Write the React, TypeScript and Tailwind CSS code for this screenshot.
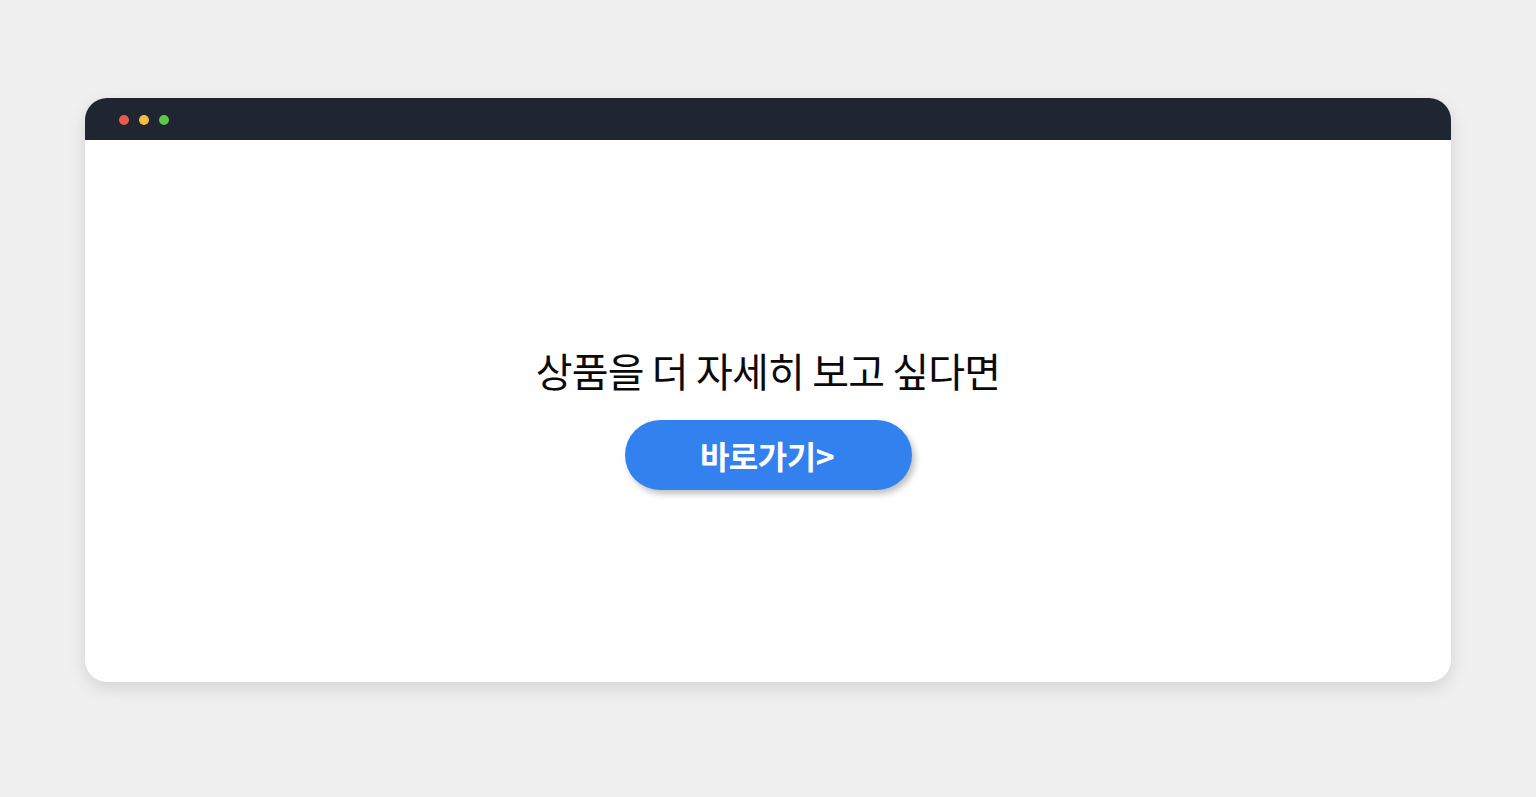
import React from "react";

export default function App() {
  return (
    <div className="w-full h-[797px] bg-[#f0f0f0] pt-[98px] px-[85px]" style={{ fontFamily: '"Noto Sans CJK KR", "Noto Sans", sans-serif' }}>
      <div className="h-[584px] rounded-[22px] bg-white overflow-hidden flex flex-col shadow-[0_6px_18px_rgba(0,0,0,0.12)]">
        <div className="h-[42px] bg-[#1f2531] flex items-center pl-[34px] pt-[2px] gap-[10px] shrink-0">
          <span className="w-[10px] h-[10px] rounded-full bg-[#ea5a4f]" />
          <span className="w-[10px] h-[10px] rounded-full bg-[#f4bd3f]" />
          <span className="w-[10px] h-[10px] rounded-full bg-[#5cc84b]" />
        </div>
        <div className="flex-1 flex flex-col items-center pt-[206px]">
          <h1 className="text-[40px] leading-[48px] font-normal text-[#0a0a0a] tracking-[-0.8px]">상품을 더 자세히 보고 싶다면</h1>
          <button className="mt-[26px] w-[287px] h-[70px] rounded-full bg-[#3381ee] text-white text-[32px] font-bold tracking-[-0.5px] flex items-center justify-center pr-[2px] shadow-[3px_4px_6px_rgba(0,0,0,0.25)]">
            바로가기&gt;
          </button>
        </div>
      </div>
    </div>
  );
}
